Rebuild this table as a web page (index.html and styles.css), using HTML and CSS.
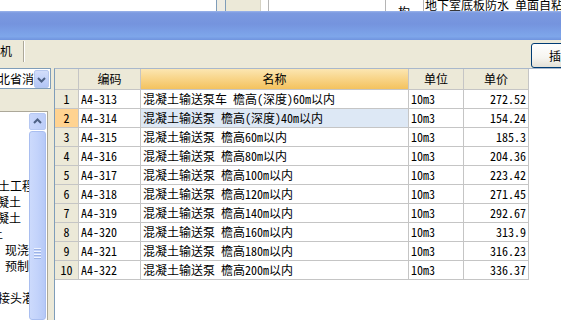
FILE: index.html
```html
<!DOCTYPE html>
<html>
<head>
<meta charset="utf-8">
<link rel="stylesheet" href="styles.css">
</head>
<body>
<div class="screen">
  <div class="behind">
    <div class="bcell b1"></div>
    <div class="bcell b2"></div>
    <div class="bcell b3"></div>
    <div class="bcell b4"></div>
    <div class="bcell b5"></div>
    <div class="bcell b6"><span class="peek">构</span></div>
    <div class="bcell b7">地下室底板防水 单面自粘防水卷材</div>
  </div>
  <div class="titlebar"></div>
  <div class="toolbar">
    <div class="tab">机</div>
    <div class="sep"></div>
    <button class="btn">插入</button>
  </div>
  <div class="content">
    <div class="leftcol">
      <div class="combo">
        <span class="combo-text">湖北省消耗量</span>
        <span class="combo-btn">
          <svg width="13" height="16" viewBox="0 0 13 16"><path d="M3 7 L6.5 10.5 L10 7" fill="none" stroke="#4D6185" stroke-width="2"/></svg>
        </span>
      </div>
      <div class="tree">
        <div class="tree-items">
          <div class="ti"></div>
          <div class="ti"></div>
          <div class="ti"></div>
          <div class="ti"></div>
          <div class="ti i-a">混凝土工程</div>
          <div class="ti i-b">混凝土</div>
          <div class="ti i-b">混凝土</div>
          <div class="ti i-c">土</div>
          <div class="ti i-d">现浇构件</div>
          <div class="ti i-d">预制构件</div>
          <div class="ti"></div>
          <div class="ti i-a">钢筋接头灌</div>
        </div>
        <div class="vscroll">
          <div class="sb-up">
            <svg width="15" height="15" viewBox="0 0 15 15"><path d="M4 9 L7.5 5.5 L11 9" fill="none" stroke="#4D6185" stroke-width="2"/></svg>
          </div>
          <div class="sb-thumb">
            <div class="grip"><i></i><i></i><i></i><i></i></div>
          </div>
        </div>
      </div>
    </div>
    <div class="gridpanel">
      <div class="grid">
        <div class="hc num"></div>
        <div class="hc">编码</div>
        <div class="hc sorted">名称</div>
        <div class="hc">单位</div>
        <div class="hc">单价</div>

        <div class="c num">1</div><div class="c">A4-313</div><div class="c">混凝土输送泵车 檐高(深度)60m以内</div><div class="c">10m3</div><div class="c r">272.52</div>
        <div class="c num selnum">2</div><div class="c">A4-314</div><div class="c sel">混凝土输送泵 檐高(深度)40m以内</div><div class="c">10m3</div><div class="c r">154.24</div>
        <div class="c num">3</div><div class="c">A4-315</div><div class="c">混凝土输送泵 檐高60m以内</div><div class="c">10m3</div><div class="c r">185.3</div>
        <div class="c num">4</div><div class="c">A4-316</div><div class="c">混凝土输送泵 檐高80m以内</div><div class="c">10m3</div><div class="c r">204.36</div>
        <div class="c num">5</div><div class="c">A4-317</div><div class="c">混凝土输送泵 檐高100m以内</div><div class="c">10m3</div><div class="c r">223.42</div>
        <div class="c num">6</div><div class="c">A4-318</div><div class="c">混凝土输送泵 檐高120m以内</div><div class="c">10m3</div><div class="c r">271.45</div>
        <div class="c num">7</div><div class="c">A4-319</div><div class="c">混凝土输送泵 檐高140m以内</div><div class="c">10m3</div><div class="c r">292.67</div>
        <div class="c num">8</div><div class="c">A4-320</div><div class="c">混凝土输送泵 檐高160m以内</div><div class="c">10m3</div><div class="c r">313.9</div>
        <div class="c num">9</div><div class="c">A4-321</div><div class="c">混凝土输送泵 檐高180m以内</div><div class="c">10m3</div><div class="c r">316.23</div>
        <div class="c num">10</div><div class="c">A4-322</div><div class="c">混凝土输送泵 檐高200m以内</div><div class="c">10m3</div><div class="c r">336.37</div>
      </div>
    </div>
  </div>
</div>
</body>
</html>
```

FILE: styles.css
```css
* { box-sizing: border-box; margin: 0; padding: 0; }
html, body { width: 561px; height: 320px; overflow: hidden; background: #fff; }
body { font-family: "Noto Sans Mono CJK SC", "Noto Sans CJK SC", "Liberation Sans", sans-serif; font-size: 12px; color: #000; }

.screen { display: flex; flex-direction: column; width: 561px; height: 320px; overflow: hidden; }

/* window behind the dialog */
.behind { display: flex; height: 11px; flex: none; overflow: hidden; background: #fff; }
.bcell { flex: none; height: 11px; overflow: hidden; white-space: nowrap; line-height: 12px; }
.b1 { width: 216px; }
.b2 { width: 9px; border-left: 1px solid #7F9DB9; background: #EFEDE3; }
.b3 { width: 36px; border-left: 1px solid #7F9DB9; border-right: 1px solid #D5D2C3; background: #ECE9D8; }
.b4 { width: 7px; }
.b5 { width: 117px; border-left: 1px solid #B5B5B5; }
.b6 { width: 38px; border-left: 1px solid #B5B5B5; padding-left: 12px; padding-top: 6px; }
.b7 { flex: 1; border-left: 1px solid #B5B5B5; padding-left: 1px; margin-top: -1px; height: 12px; }
.peek { display: block; line-height: 12px; }

/* title bar */
.titlebar {
  height: 29px; flex: none;
  background: linear-gradient(to bottom, #9CB5EA 0, #7B99E0 2px, #7594DE 45%, #7A9FE6 70%, #7EA6EA 88%, #7094DE 100%);
}

/* toolbar */
.toolbar { height: 28px; flex: none; display: flex; align-items: flex-start; background: #ECE9D8; overflow: hidden; }
.tab { width: 23px; flex: none; margin-top: 4px; line-height: 14px; }
.sep { width: 2px; height: 21px; margin-top: 1px; flex: none; border-left: 1px solid #ACA899; border-right: 1px solid #fff; }
.btn {
  flex: none; margin-left: 506px; margin-top: 3px; width: 60px; height: 25px;
  border: 1px solid #003C74; border-radius: 3px;
  background: linear-gradient(to bottom, #FFFFFF 0, #F6F5F0 60%, #E3E0D6 100%);
  font-family: inherit; font-size: 12px; color: #000; line-height: 22px;
}

/* content */
.content { flex: 1; display: flex; background: #ECE9D8; }
.leftcol { width: 54px; flex: none; display: flex; flex-direction: column; }

.combo {
  flex: none; margin-left: -20px; width: 71px; height: 21px;
  border: 1px solid #7F9DB9; background: #fff;
  display: flex; align-items: center;
}
.combo-text { flex: 1; padding-left: 5px; white-space: nowrap; overflow: hidden; line-height: 19px; }
.combo-btn {
  flex: none; width: 15px; height: 18px; margin-right: 1px;
  border: 1px solid #B7C8EF; border-radius: 2px;
  background: linear-gradient(to bottom, #D3DEFB 0, #C2D2F9 50%, #B3C6F5 100%);
  display: flex; align-items: center; justify-content: center;
}

.tree {
  flex: 1; margin-top: 22px; width: 48px;
  border-top: 1px solid #ACA899; border-right: 1px solid #ACA899;
  background: #fff; display: flex;
}
.tree-items { width: 29px; flex: none; overflow: hidden; padding-top: 2px; }
.ti { height: 16px; line-height: 16px; white-space: nowrap; }
.i-a { margin-left: -26px; }
.i-b { margin-left: -15px; }
.i-c { margin-left: -9px; }
.i-d { margin-left: 5px; }

.vscroll { width: 17px; flex: none; margin-top: 1px; display: flex; flex-direction: column; }
.sb-up {
  height: 17px; flex: none; border: 1px solid #B6C8F2; border-radius: 2px;
  background: linear-gradient(to right, #C9D7FB, #BCCDF8);
  display: flex; align-items: center; justify-content: center;
}
.sb-thumb {
  flex: 1; margin-top: 1px; border: 1px solid #A9BEF0; border-radius: 3px;
  background: linear-gradient(to right, #CCDAFC 0, #C3D3FB 50%, #B6C9F7 100%);
  display: flex; flex-direction: column; align-items: center;
}
.grip { margin-top: 116px; display: flex; flex-direction: column; gap: 1px; }
.grip i { display: block; width: 7px; height: 1px; background: #EEF3FE; border-bottom: 1px solid #9DB3E6; box-sizing: content-box; }

/* grid */
.gridpanel { flex: 1; border-left: 1px solid #7F9DB9; border-top: 1px solid #A9B8CB; background: #fff; overflow: hidden; }
.grid {
  display: grid;
  grid-template-columns: 24px 62px 268px 55px 65px;
  grid-template-rows: 21px;
  grid-auto-rows: 19px;
  width: 474px;
}
.hc, .c {
  border-right: 1px solid #C5C5C5; border-bottom: 1px solid #C5C5C5;
  white-space: nowrap; overflow: hidden;
}
.hc { background: #ECE9D8; text-align: center; line-height: 20px; }
.hc.sorted { background: linear-gradient(to bottom, #FCE6B2 0, #F8D487 50%, #F3C25E 100%); }
.c { line-height: 18px; padding: 0 2px 0 2px; }
.c.num { background: #ECE9D8; text-align: center; padding: 0; }
.c.selnum { background: #FFD391; }
.c.sel { background: #DDE8F5; }
.c.r { text-align: right; padding-right: 2px; }
```
